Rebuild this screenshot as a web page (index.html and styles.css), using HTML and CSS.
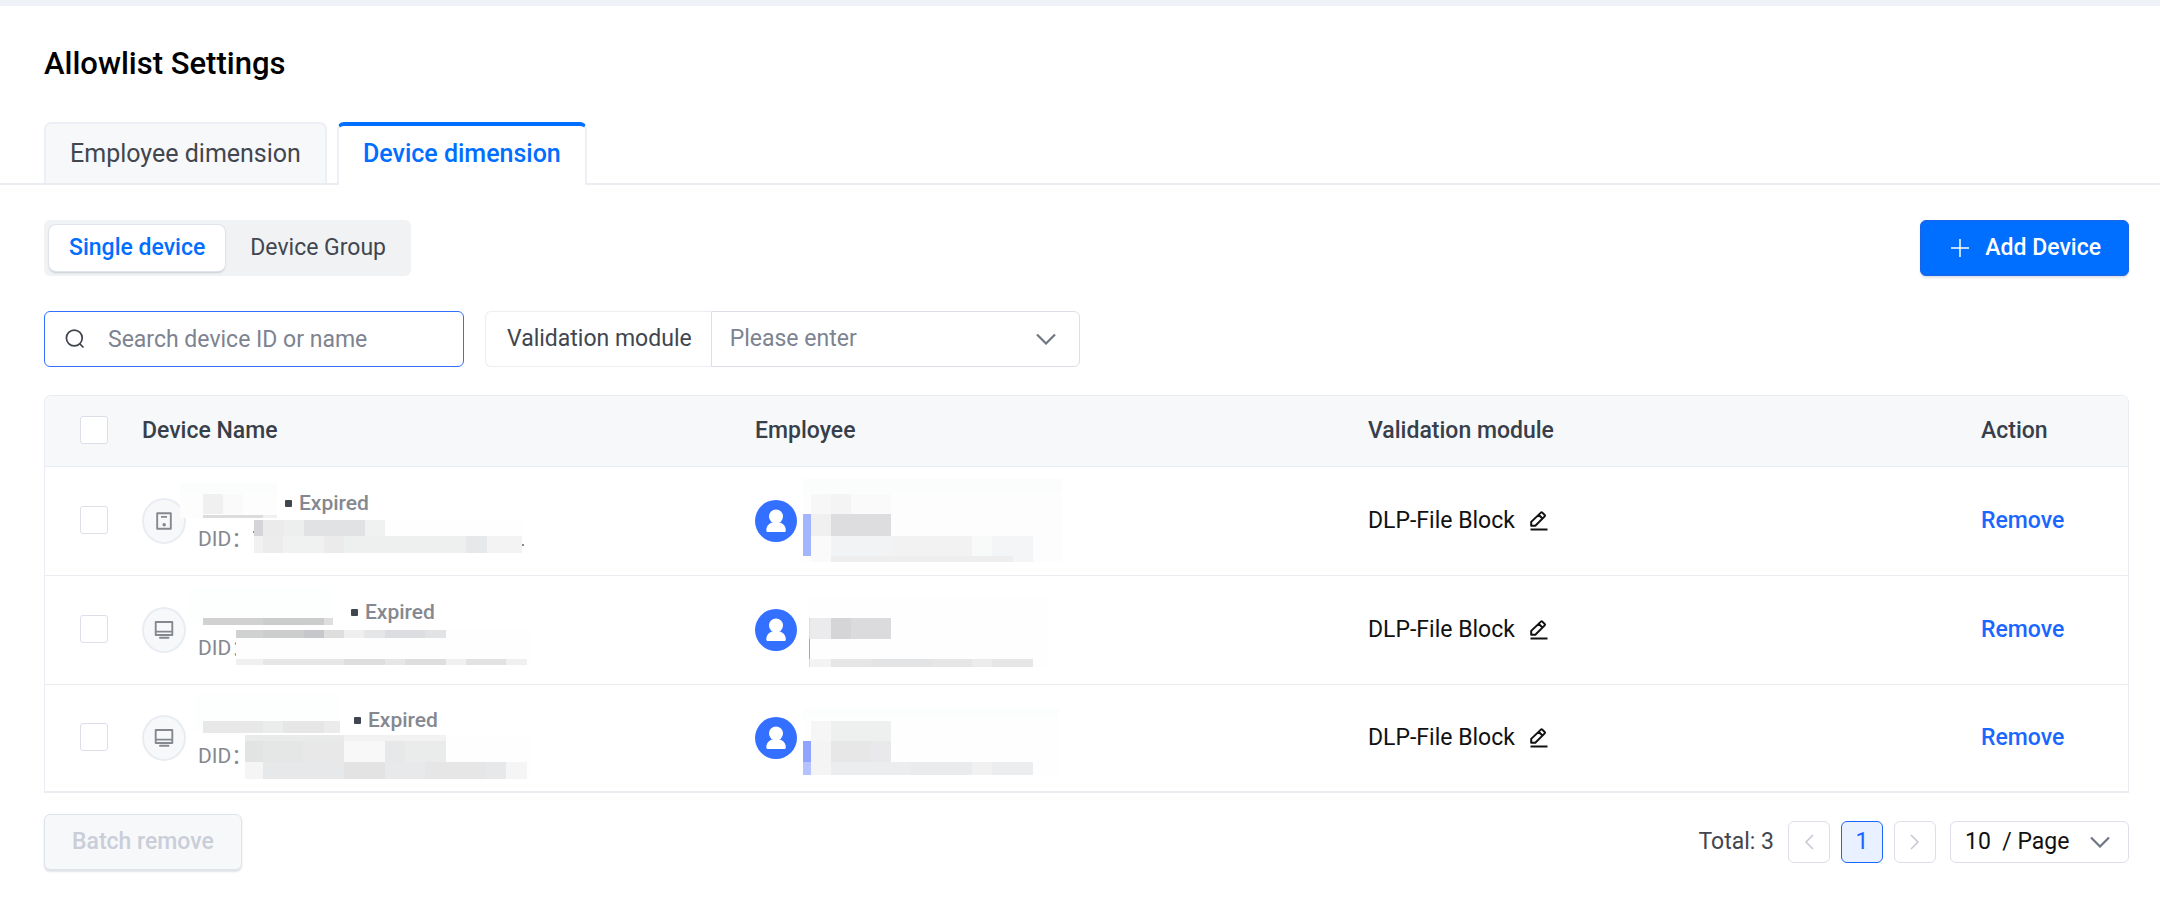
FILE: index.html
```html
<!DOCTYPE html>
<html lang="en">
<head>
<meta charset="utf-8">
<title>Allowlist Settings</title>
<link rel="stylesheet" href="styles.css">
</head>
<body>
<svg class="sprite" aria-hidden="true">
  <symbol id="chevron" viewBox="0 0 20 12"><path d="M1 1.500l9 9 9-9" fill="none" stroke="currentColor" stroke-width="2.200"/></symbol>
  <symbol id="user" viewBox="0 0 42 42"><circle cx="21" cy="21" r="21" fill="#3370ff"/><circle cx="21" cy="16.500" r="7" fill="#fff"/><path d="M17 22.500c-3.500 1-5.700 4.200-5.700 8 0 .9.500 1.500 1.400 1.500h16.700c.9 0 1.400-.6 1.400-1.500 0-3.800-2.300-7-5.800-8z" fill="#fff"/></symbol>
  <symbol id="screen" viewBox="0 0 20 18"><path d="M1.700 1h16.600v13H1.700zM1.700 10.600h16.600M6 16.800h8.500" fill="none" stroke="currentColor" stroke-width="1.900" stroke-linecap="round" stroke-linejoin="round"/></symbol>
  <symbol id="drive" viewBox="0 0 16 18"><path d="M1.200 1.200h13.600v15.600H1.200zM5 4.900h6" fill="none" stroke="currentColor" stroke-width="1.900" stroke-linejoin="round"/><circle cx="8.200" cy="12.800" r="1.800" fill="currentColor"/></symbol>
  <symbol id="pencil" viewBox="0 0 18 20"><path d="M1.200 14.800v-3.900L10.900 1.600q.7-.7 1.400 0l2.400 2.400q.7.700 0 1.400L5.300 14.800zM8.700 3.800l3.900 3.900" fill="none" stroke="currentColor" stroke-width="2" stroke-linejoin="round"/><path d="M.5 18.500h17" stroke="currentColor" stroke-width="2"/></symbol>
</svg>
<main class="page">
  <h1 class="title">Allowlist Settings</h1>

  <div class="tabs" role="tablist">
    <button class="tab" role="tab" aria-selected="false">Employee dimension</button>
    <button class="tab tab-active" role="tab" aria-selected="true">Device dimension</button>
  </div>

  <div class="content">
    <div class="toolbar">
      <div class="segment">
        <button class="segment-item segment-active">Single device</button>
        <button class="segment-item">Device Group</button>
      </div>
      <button class="button button-primary">
        <svg class="plus" viewBox="0 0 18 18" width="18" height="18" aria-hidden="true"><path d="M9 0v18M0 9h18" stroke="#fff" stroke-width="1.500"/></svg>
        Add Device
      </button>
    </div>

    <div class="filters">
      <div class="search">
        <svg viewBox="0 0 20 20" width="20" height="20" aria-hidden="true"><circle cx="9.300" cy="9" r="7.900" fill="none" stroke="#3f444d" stroke-width="1.700"/><path d="M14.800 14.800l3.700 3.700" stroke="#3f444d" stroke-width="1.700"/></svg>
        <input class="search-input" type="text" aria-label="Search device ID or name" placeholder="Search device ID or name">
      </div>
      <div class="filter">
        <label class="filter-label" for="module">Validation module</label>
        <div class="select select-module">
          <select id="module"><option>Please enter</option></select>
          <svg class="select-arrow" aria-hidden="true"><use href="#chevron"/></svg>
        </div>
      </div>
    </div>

    <div class="table-box">
      <table class="table">
        <colgroup><col class="col-check"><col><col><col><col class="col-action"></colgroup>
        <thead>
          <tr>
            <th class="cell-check"><input class="check" type="checkbox" aria-label="Select all"></th>
            <th>Device Name</th><th>Employee</th><th>Validation module</th><th>Action</th>
          </tr>
        </thead>
        <tbody>
          <tr>
            <td class="cell-check"><input class="check" type="checkbox" aria-label="Select device 1"></td>
            <td>
              <div class="device">
                <span class="device-icon"><svg width="16" height="18" aria-hidden="true"><use href="#drive"/></svg></span>
                <div class="device-text">
                  <div class="device-line"><span style="width:87px"></span><span class="dot"></span><span class="expired">Expired</span></div>
                  <div class="device-line">DID：</div>
                </div>
              </div>
              <svg class="mask" width="440" height="108" viewBox="120 467 440 108" shape-rendering="crispEdges" aria-hidden="true">
                <path fill="#fdfdfd" d="M180 483h97v35h-97z"/><path fill="#fbfcfc" d="M180 483h97v10h-97z"/>
                <path fill="#f0f0f0" d="M203 494h20v20h-20zM263 515h14v3h-14z"/><path fill="#fafafa" d="M223 494h20v20h-20z"/><path fill="#dcdcdc" d="M203 515h60v3h-60z"/>
                <path fill="#fefefe" d="M385 520h137v16H385z"/><path fill="#d5d5d7" d="M254 520h9v16h-9z"/><path fill="#ebebec" d="M263 520h21v16h-21z"/><path fill="#edefee" d="M284 520h20v16h-20z"/><path fill="#e1e2e4" d="M304 520h61v16h-61z"/><path fill="#f0f2f1" d="M365 520h20v16h-20z"/>
                <path fill="#f1f1f1" d="M254 536h9v17h-9z"/><path fill="#ececec" d="M263 536h20v17h-20z"/><path fill="#f0f1f1" d="M283 536h41v17h-41z"/><path fill="#ebebeb" d="M324 536h20v17h-20z"/><path fill="#eeefef" d="M344 536h122v17H344z"/><path fill="#e7e8ea" d="M466 536h21v17h-21z"/><path fill="#f3f3f3" d="M487 536h35v17h-35z"/>
                <path fill="#86888f" d="M253 531h1v2h-1zM522 544h2v2h-2z"/>
              </svg>
            </td>
            <td>
              <svg class="avatar" aria-hidden="true"><use href="#user"/></svg>
              <svg class="mask" width="360" height="108" viewBox="733 467 360 108" shape-rendering="crispEdges" aria-hidden="true">
                <path fill="#fdfdfd" d="M803 479h259v83H803z"/><path fill="#fbfcfc" d="M803 479h259v14H803z"/>
                <path fill="#f6f7f6" d="M811 494h20v20h-20z"/><path fill="#f4f4f4" d="M831 494h20v20h-20z"/><path fill="#fafafa" d="M851 494h40v20h-40z"/>
                <path fill="#a4b5ff" d="M803 514h8v42h-8z"/><path fill="#f0f0f1" d="M811 514h20v22h-20z"/><path fill="#dddde0" d="M831 514h60v22h-60z"/>
                <path fill="#fafafa" d="M811 536h20v26h-20z"/><path fill="#f2f3f5" d="M831 536h60v20h-60z"/><path fill="#f2f2f2" d="M891 536h81v20h-81z"/><path fill="#f8faf9" d="M972 536h20v20h-20z"/><path fill="#f3f5f6" d="M992 536h41v26h-41z"/><path fill="#eeeeef" d="M831 556h182v6H831z"/>
              </svg>
            </td>
            <td><span class="module">DLP-File Block <button class="edit" aria-label="Edit"><svg width="18" height="20"><use href="#pencil"/></svg></button></span></td>
            <td><a class="remove" href="#">Remove</a></td>
          </tr>
          <tr>
            <td class="cell-check"><input class="check" type="checkbox" aria-label="Select device 2"></td>
            <td>
              <div class="device">
                <span class="device-icon"><svg width="20" height="18" aria-hidden="true"><use href="#screen"/></svg></span>
                <div class="device-text">
                  <div class="device-line"><span style="width:153px"></span><span class="dot"></span><span class="expired">Expired</span></div>
                  <div class="device-line">DID：</div>
                </div>
              </div>
              <svg class="mask" width="440" height="108" viewBox="120 576 440 108" shape-rendering="crispEdges" aria-hidden="true">
                <path fill="#fdfefe" d="M187 588h146v37H187z"/><path fill="#d1d1d1" d="M203 618h60v7h-60z"/><path fill="#cbcccc" d="M263 618h61v7h-61z"/><path fill="#dedede" d="M324 618h9v7h-9z"/>
                <path fill="#fefefe" d="M236 630h296v35H236z"/>
                <path fill="#d0d1d1" d="M236 630h27v8h-27z"/><path fill="#cccdcd" d="M263 630h41v8h-41z"/><path fill="#c6c7ca" d="M304 630h20v8h-20z"/><path fill="#dedede" d="M324 630h20v8h-20z"/><path fill="#efefef" d="M344 630h20v8h-20z"/><path fill="#e5e6e8" d="M364 630h21v8h-21z"/><path fill="#dcdde0" d="M385 630h40v8h-40z"/><path fill="#e2e3e4" d="M425 630h21v8h-21z"/>
                <path fill="#f0f0f0" d="M236 659h27v6h-27zM446 659h20v6h-20zM506 659h21v6h-21z"/><path fill="#e6e6e6" d="M263 659h81v6h-81zM385 659h20v6h-20z"/><path fill="#dedede" d="M344 659h41v6h-41zM405 659h41v6h-41z"/><path fill="#e2e2e3" d="M466 659h40v6h-40z"/>
              </svg>
            </td>
            <td>
              <svg class="avatar" aria-hidden="true"><use href="#user"/></svg>
              <svg class="mask" width="360" height="108" viewBox="733 576 360 108" shape-rendering="crispEdges" aria-hidden="true">
                <path fill="#fefefe" d="M809 595h238v72H809z"/><path fill="#ebebee" d="M810 618h21v21h-21z"/><path fill="#d5d5d7" d="M831 618h20v21h-20z"/><path fill="#dbdbdd" d="M851 618h40v21h-40z"/>
                <path fill="#d4dbff" d="M809 618h1v49h-1z"/><path fill="#8fa3ff" d="M809 639h1v20h-1z"/>
                <path fill="#f3f3f4" d="M810 659h21v8h-21z"/><path fill="#e6e6e7" d="M831 659h40v8h-40zM931 659h41v8h-41zM992 659h41v8h-41z"/><path fill="#e3e4e6" d="M871 659h60v8h-60z"/><path fill="#ececec" d="M972 659h20v8h-20z"/>
              </svg>
            </td>
            <td><span class="module">DLP-File Block <button class="edit" aria-label="Edit"><svg width="18" height="20"><use href="#pencil"/></svg></button></span></td>
            <td><a class="remove" href="#">Remove</a></td>
          </tr>
          <tr>
            <td class="cell-check"><input class="check" type="checkbox" aria-label="Select device 3"></td>
            <td>
              <div class="device">
                <span class="device-icon"><svg width="20" height="18" aria-hidden="true"><use href="#screen"/></svg></span>
                <div class="device-text">
                  <div class="device-line"><span style="width:156px"></span><span class="dot"></span><span class="expired">Expired</span></div>
                  <div class="device-line">DID：</div>
                </div>
              </div>
              <svg class="mask" width="440" height="106" viewBox="120 685 440 106" shape-rendering="crispEdges" aria-hidden="true">
                <path fill="#fdfefe" d="M194 694h146v39H194z"/><path fill="#e8e8e8" d="M203 721h60v12h-60z"/><path fill="#ebeded" d="M263 721h20v12h-20z"/><path fill="#e6e6e6" d="M283 721h41v12h-41z"/><path fill="#ebebeb" d="M324 721h16v12h-16z"/>
                <path fill="#fefefe" d="M245 735h285v44H245z"/><path fill="#e9eaea" d="M245 735h99v6h-99z"/><path fill="#f2f2f2" d="M344 735h102v6H344z"/>
                <path fill="#e2e4e3" d="M245 741h18v21h-18z"/><path fill="#e5e6e6" d="M263 741h40v21h-40z"/><path fill="#e8e8e8" d="M303 741h41v21h-41z"/><path fill="#f8f8f8" d="M344 741h41v21h-41z"/><path fill="#e6e8ea" d="M385 741h20v21h-20z"/><path fill="#eaeceb" d="M405 741h41v21h-41z"/>
                <path fill="#f5f5f5" d="M245 762h18v17h-18zM506 762h21v17h-21z"/><path fill="#e6e8ea" d="M263 762h81v17h-81zM486 762h20v17h-20z"/><path fill="#e3e3e3" d="M344 762h41v17h-41z"/><path fill="#e8e9ea" d="M385 762h40v17h-40z"/><path fill="#e6e6e6" d="M425 762h61v17h-61z"/>
              </svg>
            </td>
            <td>
              <svg class="avatar" aria-hidden="true"><use href="#user"/></svg>
              <svg class="mask" width="360" height="106" viewBox="733 685 360 106" shape-rendering="crispEdges" aria-hidden="true">
                <path fill="#fefefe" d="M803 708h256v67H803z"/><path fill="#fcfefe" d="M803 708h256v10H803z"/>
                <path fill="#f6f6f6" d="M811 721h20v20h-20z"/><path fill="#eef0ef" d="M831 721h60v20h-60z"/>
                <path fill="#8fa3ff" d="M803 741h8v21h-8z"/><path fill="#f4f4f5" d="M811 741h20v34h-20z"/><path fill="#e7e7e7" d="M831 741h40v21h-40z"/><path fill="#e9e9eb" d="M871 741h20v21h-20z"/>
                <path fill="#b5c2ff" d="M803 762h8v13h-8z"/><path fill="#ecedee" d="M831 762h80v13h-80zM992 762h41v13h-41z"/><path fill="#eaebed" d="M911 762h61v13h-61z"/><path fill="#f1f1f1" d="M972 762h20v13h-20z"/>
              </svg>
            </td>
            <td><span class="module">DLP-File Block <button class="edit" aria-label="Edit"><svg width="18" height="20"><use href="#pencil"/></svg></button></span></td>
            <td><a class="remove" href="#">Remove</a></td>
          </tr>
        </tbody>
      </table>
    </div>

    <div class="footer">
      <button class="button button-disabled" disabled>Batch remove</button>
      <nav class="pager" aria-label="Pagination">
        <span class="total">Total: 3</span>
        <button class="page-button" aria-label="Previous page"><svg width="10" height="16" viewBox="0 0 10 16"><path d="M9 1L2 8l7 7" fill="none" stroke="currentColor" stroke-width="1.500"/></svg></button>
        <button class="page-button page-current" aria-current="page">1</button>
        <button class="page-button" aria-label="Next page"><svg width="10" height="16" viewBox="0 0 10 16"><path d="M1 1l7 7-7 7" fill="none" stroke="currentColor" stroke-width="1.500"/></svg></button>
        <div class="select select-size">
          <select aria-label="Rows per page"><option>10 &nbsp;/ Page</option></select>
          <svg class="select-arrow" aria-hidden="true"><use href="#chevron"/></svg>
        </div>
      </nav>
    </div>
  </div>
</main>
</body>
</html>
```
FILE: styles.css
```css
* { box-sizing: border-box; }
body {
  margin: 0;
  border-top: 6px solid #eff3f8;
  background: #fff;
  color: #41464f;
  font: 400 23px/32px Roboto, "Noto Sans CJK SC", sans-serif;
}
button, input, select { margin: 0; font: inherit; color: inherit; }
button { cursor: pointer; }
.sprite { display: none; }

.title {
  margin: 0;
  padding: 37px 44px 0;
  color: #000;
  font-size: 31px;
  font-weight: 500;
  line-height: 42px;
}
.tabs {
  display: flex;
  gap: 10px;
  margin-top: 37px;
  padding: 0 44px;
  border-bottom: 2px solid #e9edf2;
}
.tab {
  height: 61px;
  padding: 0 24px;
  border: 2px solid #eceff3;
  border-bottom: 0;
  border-radius: 7px 7px 0 0;
  background: #f7f8fa;
  color: #41464f;
  font-size: 25px;
}
.tab-active {
  height: 63px;
  margin-bottom: -2px;
  padding-bottom: 4px;
  border-top: 4px solid #006eff;
  background: #fff;
  color: #006eff;
  font-weight: 500;
}

.content { padding: 35px 31px 36px 44px; }
.toolbar { display: flex; justify-content: space-between; align-items: center; }
.segment {
  display: flex;
  gap: 5px;
  padding: 5px;
  border-radius: 6px;
  background: #f1f2f4;
}
.segment-item {
  height: 46px;
  padding: 0 20px;
  border: 0;
  border-radius: 7px;
  background: transparent;
}
.segment-active {
  background: #fff;
  color: #006eff;
  font-weight: 500;
  box-shadow: 0 0 0 1px #dfe3ea, 0 2px 2px #c9ccd2;
}
.button {
  display: flex;
  align-items: center;
  height: 56px;
  padding: 0 27px;
  border: 1px solid #dee2e9;
  border-radius: 6px;
  font-weight: 500;
  box-shadow: 0 2px 2px #e0e3e7;
}
.button-primary {
  gap: 16px;
  padding: 0 27px 0 30px;
  border-color: #1a62e6;
  background: #006eff;
  color: #fff;
}
.button-disabled { background: #f7f8fa; color: #c9ced9; }

.filters { display: flex; gap: 21px; margin-top: 35px; }
.search {
  display: flex;
  align-items: center;
  gap: 23px;
  width: 420px;
  height: 56px;
  padding: 0 20px;
  border: 1px solid #3370ff;
  border-radius: 6px;
}
.search-input {
  flex: 1;
  min-width: 0;
  padding: 1px 0 0;
  border: 0;
  outline: 0;
  background: none;
}
.search-input::placeholder { color: #7d8390; opacity: 1; }
.filter { display: flex; width: 595px; }
.filter-label {
  display: flex;
  align-items: center;
  padding: 0 19px 0 21px;
  border: 1px solid #eceef2;
  border-right: 0;
  border-radius: 6px 0 0 6px;
}
.select { position: relative; }
.select select {
  width: 100%;
  height: 100%;
  padding: 0 50px 0 18px;
  border: 1px solid #dcdfe8;
  border-radius: 6px;
  background: #fff;
  appearance: none;
}
.select-arrow {
  position: absolute;
  top: 50%;
  right: 24px;
  width: 20px;
  height: 12px;
  margin-top: -6px;
  color: #6f7785;
  pointer-events: none;
}
.select-module { flex: 1; }
.select-module select { border-radius: 0 6px 6px 0; color: #7d8390; }

.table-box {
  margin-top: 28px;
  border: 1px solid #e9ecf1;
  border-bottom: 2px solid #e9edf2;
  border-radius: 7px 7px 0 0;
  overflow: hidden;
}
.table { width: 100%; border-collapse: separate; border-spacing: 0; table-layout: fixed; }
.col-check { width: 75px; }
.col-action { width: 169px; }
.table th, .table td {
  position: relative;
  height: 109px;
  padding: 0 22px;
  border-bottom: 1px solid #e9ecf1;
  text-align: left;
  vertical-align: middle;
}
.table th { height: 71px; background: #f7f8fa; color: #373f4b; font-weight: 500; }
.table tr:last-child td { height: 106px; border-bottom: 0; }
.table .cell-check { padding: 0 0 2px 35px; }
.check {
  display: block;
  width: 28px;
  height: 28px;
  border: 1px solid #dcdfe8;
  border-radius: 3px;
  background: #fff;
  appearance: none;
}
.device { display: flex; align-items: center; gap: 12px; }
.device-icon {
  display: flex;
  align-items: center;
  justify-content: center;
  width: 44px;
  height: 46px;
  border: 2px solid #e9edf2;
  border-radius: 50%;
  background: #f7f8fa;
  color: #868890;
}
.device-text { color: #868890; font-size: 21px; line-height: 36px; }
.device-line { display: flex; align-items: center; height: 36px; }
.dot { width: 7px; height: 7px; margin-right: 7px; border-radius: 1px; background: #3f4650; }
.expired { font-weight: 500; }
.mask { position: absolute; top: 0; left: 0; pointer-events: none; }
.avatar { display: block; width: 42px; height: 42px; }
.module { display: flex; align-items: center; gap: 15px; color: #111; }
.edit { display: flex; padding: 0; border: 0; background: none; }
.remove { color: #1a66ff; font-weight: 500; text-decoration: none; }

.footer { display: flex; justify-content: space-between; align-items: center; margin-top: 21px; }
.pager { display: flex; align-items: center; gap: 11px; }
.total { margin-right: 3px; }
.page-button {
  display: flex;
  align-items: center;
  justify-content: center;
  width: 42px;
  height: 42px;
  padding: 0;
  border: 1px solid #dcdfe8;
  border-radius: 6px;
  background: #fff;
  color: #c3c8d2;
}
.page-current { border-color: #1a66ff; background: #e9f0ff; color: #1a66ff; }
.select-size { width: 179px; height: 42px; margin-left: 3px; }
.select-size select { padding: 0 40px 0 14px; color: #111; }
.select-size .select-arrow { right: 19px; }
```
